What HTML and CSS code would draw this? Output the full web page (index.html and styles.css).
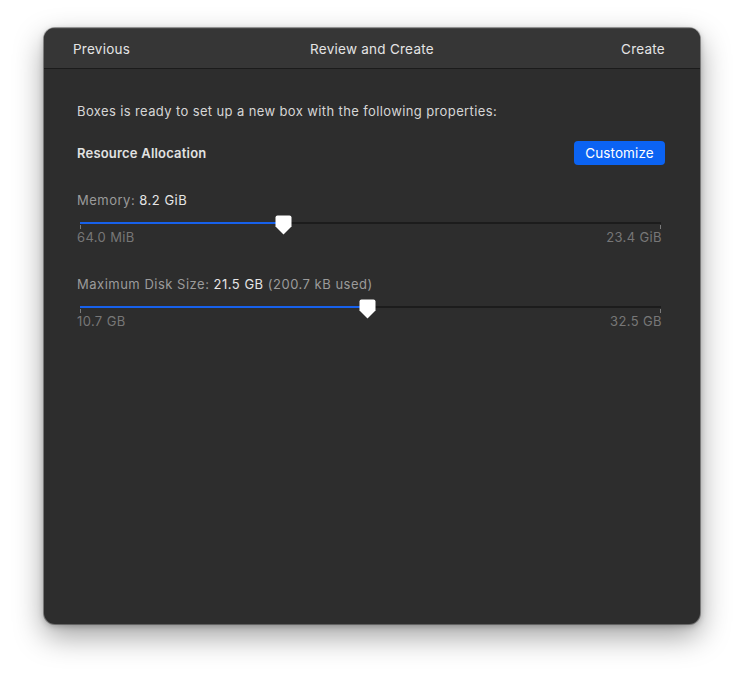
FILE: index.html
```html
<!DOCTYPE html>
<html>
<head>
<meta charset="utf-8">
<link rel="stylesheet" href="styles.css">
</head>
<body>
<div class="window">
  <div class="titlebar">
    <span class="nav">Previous</span>
    <span class="title">Review and Create</span>
    <span class="nav right">Create</span>
  </div>
  <div class="content">
    <p class="intro">Boxes is ready to set up a new box with the following properties:</p>
    <div class="section-head">
      <span class="section-title">Resource Allocation</span>
      <button class="btn">Customize</button>
    </div>
    <div class="field mem">
      <div class="label"><span class="key">Memory:</span> <span class="val">8.2 GiB</span></div>
      <div class="slider">
        <div class="track"><div class="fill" style="width:35.1%"></div>
          <span class="tick l"></span><span class="tick r"></span>
          <svg class="thumb" style="left:35.1%" width="17" height="20" viewBox="0 0 17 20"><path d="M2.5 0.5 H14.5 Q16.5 0.5 16.5 2.5 V11.5 L8.5 19.5 L0.5 11.5 V2.5 Q0.5 0.5 2.5 0.5Z" fill="#fff"/></svg>
        </div>
      </div>
      <div class="range"><span>64.0 MiB</span><span>23.4 GiB</span></div>
    </div>
    <div class="field disk">
      <div class="label"><span class="key">Maximum Disk Size:</span> <span class="val">21.5 GB</span> <span class="key">(200.7 kB used)</span></div>
      <div class="slider">
        <div class="track"><div class="fill" style="width:49.4%"></div>
          <span class="tick l"></span><span class="tick r"></span>
          <svg class="thumb" style="left:49.4%" width="17" height="20" viewBox="0 0 17 20"><path d="M2.5 0.5 H14.5 Q16.5 0.5 16.5 2.5 V11.5 L8.5 19.5 L0.5 11.5 V2.5 Q0.5 0.5 2.5 0.5Z" fill="#fff"/></svg>
        </div>
      </div>
      <div class="range"><span>10.7 GB</span><span>32.5 GB</span></div>
    </div>
  </div>
</div>
</body>
</html>
```
FILE: styles.css
```css
* { box-sizing: border-box; }
html, body { margin: 0; padding: 0; background: #ffffff; }
body {
  font-family: Inter, "Noto Sans", "Liberation Sans", sans-serif;
  font-size: 13px;
  letter-spacing: 0.38px;
  width: 744px;
  height: 684px;
  overflow: hidden;
}
.window {
  margin: 28px 0 0 44px;
  width: 656px;
  height: 596px;
  background: #2d2d2d;
  border-radius: 11px;
  box-shadow: 0 0 0 1px rgba(0,0,0,0.35), 0 12px 30px rgba(0,0,0,0.38), 0 2px 6px rgba(0,0,0,0.25);
  overflow: hidden;
}
.titlebar {
  height: 41px;
  background: #363636;
  border-bottom: 1px solid #1b1b1b;
  display: grid;
  grid-template-columns: 1fr auto 1fr;
  align-items: center;
  padding: 2px 35px 0 29px;
  color: #e4e4e4;
  font-size: 13.5px;
  letter-spacing: 0.25px;
  box-shadow: inset 0 1px 0 rgba(255,255,255,0.08);
}
.title { text-align: center; padding-left: 6px; }
.nav.right { text-align: right; }
.content {
  padding: 34px 35px 0 33px;
}
.intro {
  margin: 0;
  line-height: 16px;
  color: #d6d6d6;
}
.section-head {
  margin-top: 22px;
  display: flex;
  justify-content: space-between;
  align-items: center;
  height: 24px;
}
.section-title {
  font-weight: 600;
  color: #e2e2e2;
  letter-spacing: 0.2px;
}
.btn {
  height: 24px;
  width: 91px;
  padding: 0;
  border: none;
  border-radius: 4px;
  background: #0b63f3;
  color: #ffffff;
  font-family: inherit;
  font-size: 13.5px;
  letter-spacing: 0.1px;
}
.field.mem { margin-top: 27px; }
.field.disk { margin-top: 31px; }
.label {
  line-height: 16px;
  letter-spacing: 0.5px;
}
.key { color: #9b9b9b; }
.val { color: #e6e6e6; }
.slider {
  margin: 7px 4px 0 3px;
  height: 14px;
  position: relative;
}
.track {
  position: relative;
  top: 7px;
  height: 2px;
  background: #1c1c1c;
}
.fill {
  height: 2px;
  background: #1761ec;
}
.tick {
  position: absolute;
  top: 3px;
  width: 1px;
  height: 4px;
  background: #7a7a7a;
}
.tick.l { left: 0; }
.tick.r { right: 0; }
.thumb {
  position: absolute;
  top: -7px;
  margin-left: -8.5px;
}
.range {
  display: flex;
  justify-content: space-between;
  line-height: 16px;
  color: #777777;
  padding-right: 3px;
}
```
